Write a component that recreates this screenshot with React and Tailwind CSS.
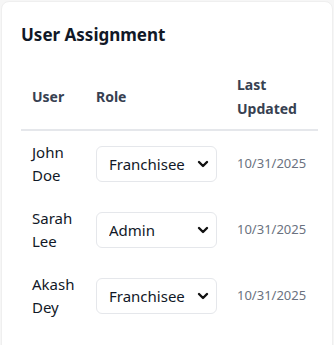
import React from "react";

const rows = [
  { first: "John", last: "Doe", role: "Franchisee" },
  { first: "Sarah", last: "Lee", role: "Admin" },
  { first: "Akash", last: "Dey", role: "Franchisee" },
];

function Chevron() {
  return (
    <svg width="12" height="8" viewBox="0 0 12 8" className="absolute right-[8px] top-1/2 -translate-y-1/2 pointer-events-none">
      <path d="M2 2 L6 6 L10 2" fill="none" stroke="#111" strokeWidth="2.4" strokeLinecap="round" strokeLinejoin="round" />
    </svg>
  );
}

export default function App() {
  return (
    <div className="w-[334px] h-[345px] bg-[#f6f6f6] pt-px pl-px overflow-hidden" style={{ fontFamily: '"Noto Sans", sans-serif' }}>
      <div className="w-[332px] h-[360px] bg-white rounded-lg border border-[#efefef] pt-[19px] pl-[19px]">
        <h2 className="text-[17px] font-bold text-[#111827] leading-[28px]">User Assignment</h2>
        <table className="mt-[16px] table-fixed border-collapse w-[297px]">
          <colgroup>
            <col className="w-[64px]" />
            <col className="w-[141px]" />
            <col className="w-[92px]" />
          </colgroup>
          <thead>
            <tr className="border-b-2 border-[#e5e7eb]">
              <th className="text-left pl-[11px] py-[8px] text-[14px] font-bold text-[#374151] leading-[24px] align-middle">User</th>
              <th className="text-left pl-[11px] py-[8px] text-[14px] font-bold text-[#374151] leading-[24px] align-middle">Role</th>
              <th className="text-left pl-[11px] py-[8px] text-[14px] font-bold text-[#374151] leading-[24px] align-middle">Last<br />Updated</th>
            </tr>
          </thead>
          <tbody>
            {rows.map((r) => (
              <tr key={r.first}>
                <td className="pl-[11px] py-[10px] text-[15px] text-[#111827] leading-[23px] align-middle">{r.first}<br />{r.last}</td>
                <td className="pl-[11px] py-[10px] align-middle">
                  <div className="relative w-[121px] h-[36px]">
                    <select defaultValue={r.role} className="appearance-none w-full h-full border border-[#e5e7eb] rounded-md bg-white pl-[12px] text-[15px] text-[#111827] outline-none">
                      <option>Franchisee</option>
                      <option>Admin</option>
                    </select>
                    <Chevron />
                  </div>
                </td>
                <td className="pl-[11px] py-[10px] text-[13px] text-[#6b7280] align-middle">10/31/2025</td>
              </tr>
            ))}
          </tbody>
        </table>
      </div>
    </div>
  );
}
